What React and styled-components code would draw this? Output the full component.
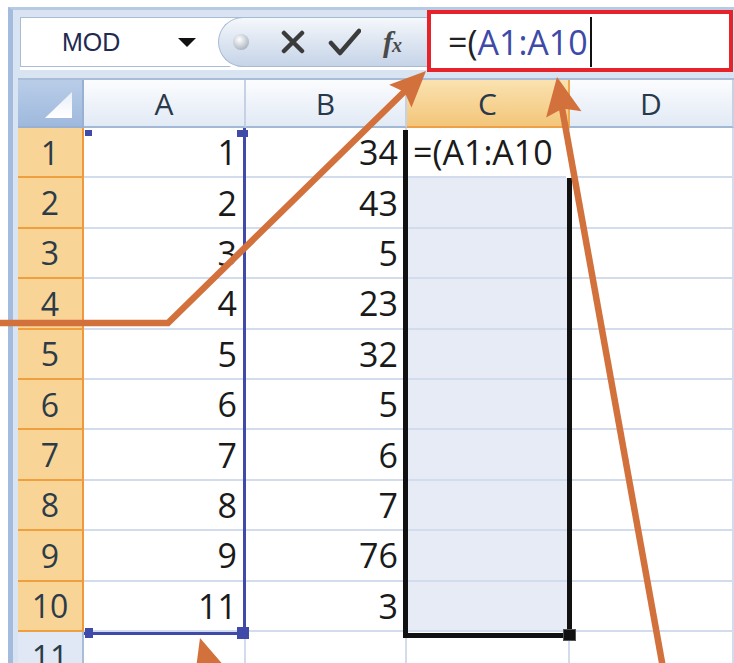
import React from 'react'
import styled, { createGlobalStyle } from 'styled-components'

const GlobalStyle = createGlobalStyle`
  html, body {
    margin: 0;
    padding: 0;
    background: #fff;
  }
  body {
    font-family: "Open Sans", "Liberation Sans", sans-serif;
    overflow: hidden;
  }
  * { box-sizing: border-box; }
`

const colA = [1, 2, 3, 4, 5, 6, 7, 8, 9, 11]
const colB = [34, 43, 5, 23, 32, 5, 6, 7, 76, 3]
const columns = ['A', 'B', 'C', 'D']
const formula = '=(A1:A10'

const Page = styled.div`
    position: relative;
    width: 734px;
    height: 663px;
    padding-top: 7px;
    overflow: hidden;
    background: #fff;
`

const Window = styled.div`
    margin-left: 8px;
    height: 100%;
    border-left: 5px solid #a3bcde;
    border-top: 3px solid #b7cae3;
    padding-left: 5px;
    background: #d9e4f2;
`

const FormulaRow = styled.div`
    display: flex;
    height: 62px;
`

const NameBox = styled.div`
    display: flex;
    align-items: center;
    width: 225px;
    height: 50px;
    margin: 7px 0 0 2px;
    padding-left: 41px;
    background: #fff;
    border: 1px solid #a9bcd6;
    box-shadow: 0 3px 0 #fff;
    font-family: "Liberation Sans", Arial, sans-serif;
    font-size: 25px;
    color: #1f2a52;
`

const Caret = styled.span`
    margin-left: 58px;
    width: 0;
    height: 0;
    border-left: 9px solid transparent;
    border-right: 9px solid transparent;
    border-top: 9px solid #111;
`

const Pill = styled.div`
    position: relative;
    z-index: 1;
    display: flex;
    align-items: center;
    width: 212px;
    height: 50px;
    margin: 7px -3px 0 -27px;
    padding-left: 14px;
    border: 1px solid #a7bad4;
    border-right: none;
    border-radius: 26px 0 0 26px;
    background: linear-gradient(#f5f8fc, #dfe7f2 45%, #c6d4e8);
    box-shadow: 0 3px 0 #fff;
`

const Dot = styled.span`
    width: 16px;
    height: 16px;
    border-radius: 50%;
    background: radial-gradient(circle at 40% 35%, #ffffff, #c8ced6 50%, #8f99a6);
`

const ToolIcon = styled.svg`
    margin-left: ${p => p.$gap}px;
    flex: none;
`

const FxLabel = styled.span`
    margin-left: 22px;
    font-family: "Liberation Serif", "Times New Roman", serif;
    font-style: italic;
    font-weight: bold;
    font-size: 30px;
    color: #4a4a4a;
    letter-spacing: -1px;

    small {
        font-size: 20px;
    }
`

const FormulaInput = styled.div`
    position: relative;
    z-index: 2;
    flex: 1;
    display: flex;
    align-items: center;
    height: 62px;
    margin-right: 1px;
    padding: 2px 0 0 17px;
    background: #fff;
    border: 4px solid #e6222b;
    font-size: 34px;
    color: #222;
`

const Ref = styled.span`
    color: #3d4aa8;
`

const TextCursor = styled.span`
    width: 2px;
    height: 50px;
    margin-left: 2px;
    background: #111;
`

const Strip = styled.div`
    height: 8px;
    border-bottom: 2px solid #a9bdd8;
`

const Grid = styled.div`
    position: relative;
    display: grid;
    grid-template-columns: 66px 162px 161px 163px 1fr;
    grid-template-rows: 48px repeat(11, 50.4px);
`

const Corner = styled.div`
    background: linear-gradient(#b9cde8, #9fb9dd);
    border-right: 2px solid #98b0d2;
    border-bottom: 2px solid #98b0d2;
`

const ColHeader = styled.div`
    display: flex;
    align-items: center;
    justify-content: center;
    font-size: 30px;
    color: #27394a;
    background: ${p => p.$active
        ? 'linear-gradient(#fae2b0, #f3c67a)'
        : 'linear-gradient(#fbfcfe, #e2eaf5)'};
    border-right: 2px solid ${p => p.$active ? '#f0a84c' : '#c4d2e4'};
    border-bottom: 2px solid ${p => p.$active ? '#eea046' : '#a3b8d4'};
`

const RowHeader = styled.div`
    display: flex;
    align-items: center;
    justify-content: center;
    font-size: 32px;
    color: #2b3c48;
    background: ${p => p.$active ? '#f9d497' : '#dfe8f4'};
    border-right: 2px solid ${p => p.$active ? '#f0993a' : '#a9bdd8'};
    border-bottom: 2px solid ${p => p.$active ? '#ef9f3e' : '#c4d2e4'};
`

const Cell = styled.div`
    display: flex;
    align-items: center;
    justify-content: ${p => p.$left ? 'flex-start' : 'flex-end'};
    padding: ${p => p.$left ? '0 0 0 6px' : '0 7px 0 0'};
    font-size: 34px;
    color: #1a1a1a;
    white-space: nowrap;
    background: ${p => p.$fill ? '#e6ebf5' : '#fff'};
    border-right: 2px solid #d3dced;
    border-bottom: 2px solid #d3dced;
`

/* blue outline around the referenced range A1:A10 */
const RefRange = styled.div`
    position: absolute;
    left: 66px;
    top: 48px;
    width: 162px;
    height: 507px;
    border-right: 3px solid #3f4aa9;
    border-bottom: 3px solid #3f4aa9;
    pointer-events: none;
`

const Handle = styled.span`
    position: absolute;
    width: ${p => p.$w}px;
    height: ${p => p.$h}px;
    background: ${p => p.$dark ? '#111' : '#3f4aa9'};
    ${p => p.$pos}
`

/* thick black border of the C1:C10 selection */
const Selection = styled.div`
    position: absolute;
    left: 385px;
    top: 50px;
    width: 169px;
    height: 508px;
    border: 5px solid #111;
    border-top: none;
    pointer-events: none;
`

const EditGap = styled.span`
    position: absolute;
    right: -5px;
    top: 0;
    width: 6px;
    height: 48px;
    background: #fff;
`

const Arrows = styled.svg`
    position: absolute;
    left: 0;
    top: 0;
    z-index: 5;
    pointer-events: none;
`

const ArrowLayer = () => {
    const c = '#d2713b'
    return (
        <Arrows width="734" height="663" viewBox="0 0 734 663">
            <g fill="none" stroke={c} strokeWidth="6.5">
                <polyline points="0,323 168,323 406,90" />
                <line x1="676" y1="740" x2="562" y2="108" />
                <line x1="240" y1="770" x2="209" y2="668" />
            </g>
            <g fill={c}>
                <polygon points="426,71 411.5,107.6 404.5,92 389.1,84.8" />
                <polygon points="557,77 581.5,111.2 562.7,108.5 546.1,117.6" />
                <polygon points="200,638 227.2,669.5 209,668 194.6,679.3" />
            </g>
        </Arrows>
    )
}

const App = () => {
    return (
        <Page>
            <GlobalStyle />
            <Window>
                <FormulaRow>
                    <NameBox>
                        <span>MOD</span>
                        <Caret />
                    </NameBox>
                    <Pill>
                        <Dot />
                        <ToolIcon $gap={31} width="26" height="24" viewBox="0 0 26 24">
                            <path d="M4 3 L22 21 M22 3 L4 21" stroke="#3b3b3b" strokeWidth="4.5" strokeLinecap="round" />
                        </ToolIcon>
                        <ToolIcon $gap={22} width="33" height="28" viewBox="0 0 33 28">
                            <path d="M3 15 L12 25 L31 3" fill="none" stroke="#3b3b3b" strokeWidth="4.5" strokeLinejoin="round" strokeLinecap="round" />
                        </ToolIcon>
                        <FxLabel>f<small>x</small></FxLabel>
                    </Pill>
                    <FormulaInput>
                        <span>=(<Ref>A1:A10</Ref></span>
                        <TextCursor />
                    </FormulaInput>
                </FormulaRow>
                <Strip />
                <Grid>
                    <Corner>
                        <svg width="64" height="46" viewBox="0 0 64 46">
                            <defs>
                                <linearGradient id="tri" x1="0" y1="0" x2="0" y2="1">
                                    <stop offset="0" stopColor="#e9eff8" />
                                    <stop offset="1" stopColor="#ffffff" />
                                </linearGradient>
                            </defs>
                            <polygon points="27,38 54,12 54,38" fill="url(#tri)" />
                        </svg>
                    </Corner>
                    {columns.map(col => (
                        <ColHeader key={col} $active={col === 'C'}>{col}</ColHeader>
                    ))}
                    {colA.map((a, i) => (
                        <React.Fragment key={i}>
                            <RowHeader $active>{i + 1}</RowHeader>
                            <Cell>{a}</Cell>
                            <Cell>{colB[i]}</Cell>
                            {i === 0
                                ? <Cell $left>{formula}</Cell>
                                : <Cell $fill />}
                            <Cell />
                        </React.Fragment>
                    ))}
                    <RowHeader>11</RowHeader>
                    <Cell />
                    <Cell />
                    <Cell />
                    <Cell />

                    <RefRange>
                        <Handle $w={7} $h={6} $pos="left: 1px; top: 2px;" />
                        <Handle $w={11} $h={7} $pos="right: -5px; top: 2px;" />
                        <Handle $w={8} $h={10} $pos="left: 1px; bottom: -6px;" />
                        <Handle $w={12} $h={12} $pos="right: -6px; bottom: -7px;" />
                    </RefRange>
                    <Selection>
                        <EditGap />
                        <Handle $dark $w={13} $h={12} $pos="right: -9px; bottom: -8px; border: 1px solid #555;" />
                    </Selection>
                </Grid>
            </Window>
            <ArrowLayer />
        </Page>
    )
}

export default App
